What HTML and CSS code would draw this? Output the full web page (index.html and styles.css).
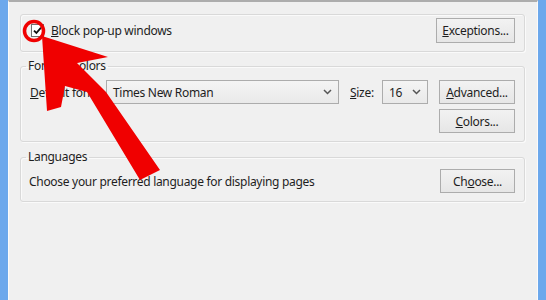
FILE: index.html
```html
<!DOCTYPE html>
<html>
<head>
    <title>Options - Content</title>
    <meta name="viewport" content="width=device-width, initial-scale=1">
    <link rel="stylesheet" href="styles.css">
</head>
<body>
    <div class="window">
        <div class="frame"></div>
        <div class="pane">
            <!-- Pop-ups -->
            <div class="group popup-group">
                <label class="check-row">
                    <span class="checkbox">
                        <svg width="9" height="9" viewBox="0 0 9 9">
                            <path d="M1 4.6 L3.4 7 L8 1.6" fill="none" stroke="#111" stroke-width="1.8"/>
                        </svg>
                    </span>
                    <span><u>B</u>lock pop-up windows</span>
                </label>
                <button class="btn btn-exceptions"><u>E</u>xceptions...</button>
            </div>

            <!-- Fonts & Colors -->
            <fieldset class="group fonts-group">
                <legend>Fonts &amp; Colors</legend>
                <div class="font-row">
                    <span class="label label-font"><u>D</u>efault font:</span>
                    <div class="select select-font">
                        <span>Times New Roman</span>
                        <svg class="chevron" width="9" height="6" viewBox="0 0 9 6">
                            <path d="M1 1 L4.5 4.5 L8 1" fill="none" stroke="#555" stroke-width="1.5"/>
                        </svg>
                    </div>
                    <span class="label label-size"><u>S</u>ize:</span>
                    <div class="select select-size">
                        <span>16</span>
                        <svg class="chevron" width="9" height="6" viewBox="0 0 9 6">
                            <path d="M1 1 L4.5 4.5 L8 1" fill="none" stroke="#555" stroke-width="1.5"/>
                        </svg>
                    </div>
                    <button class="btn btn-advanced"><u>A</u>dvanced...</button>
                </div>
                <div class="colors-row">
                    <button class="btn btn-colors"><u>C</u>olors...</button>
                </div>
            </fieldset>

            <!-- Languages -->
            <fieldset class="group lang-group">
                <legend>Languages</legend>
                <div class="lang-row">
                    <span class="label">Choose your preferred language for displaying pages</span>
                    <button class="btn btn-choose">Ch<u>o</u>ose...</button>
                </div>
            </fieldset>
        </div>
        <div class="frame"></div>
    </div>

    <!-- annotation -->
    <svg class="annotation" width="546" height="300" viewBox="0 0 546 300">
        <circle cx="34" cy="31" r="9.5" fill="none" stroke="#f00000" stroke-width="3.5"/>
        <polygon fill="#f00000"
            points="42,36 108,57 77,63 106,92 160,170 140,180 87,92 65,86 61,107 47,111"/>
    </svg>
</body>
</html>
```

FILE: styles.css
```css
body {
    margin: 0;
    font-family: "Noto Sans", Arial, sans-serif;
    font-size: 12px;
    letter-spacing: -0.3px;
    color: #1e1e1e;
    background: #f0f0f0;
}
.window {
    display: flex;
    height: 300px;
}
.frame {
    width: 8px;
    background: #6ca8ec;
}
.pane {
    flex: 1;
    background: #f0f0f0;
    border-top: 2px solid #adadad;
    border-left: 1px solid #fbfbfb;
    border-right: 1px solid #fbfbfb;
    padding: 12px 12px 0 11px;
}
.group {
    border: 1px solid #d9d9d9;
    border-radius: 3px;
    box-shadow: inset 1px 1px 0 #fafafa, 1px 1px 0 #fafafa;
    margin: 0;
    padding: 3px 9px 8px 9px;
    min-inline-size: 0;
}
.group legend {
    padding: 0 2px;
    margin-left: -4px;
    line-height: 16px;
}
.popup-group {
    display: flex;
    justify-content: space-between;
    align-items: center;
}
.check-row {
    display: flex;
    align-items: center;
    gap: 7px;
    padding-left: 1px;
}
.checkbox {
    width: 11px;
    height: 11px;
    border: 1px solid #707070;
    background: #fff;
    display: flex;
    align-items: center;
    justify-content: center;
}
.btn {
    font-family: inherit;
    font-size: 12px;
    letter-spacing: -0.3px;
    color: #1e1e1e;
    height: 24px;
    padding: 0;
    border: 1px solid #acacac;
    border-radius: 0;
    background: linear-gradient(#f2f2f2, #e6e6e6);
    text-align: center;
}
.btn-exceptions {
    width: 79px;
    height: 25px;
}
.btn-advanced,
.btn-colors {
    width: 76px;
}
.btn-choose {
    width: 75px;
}
.fonts-group {
    margin-top: 6px;
    padding-top: 6px;
}
.font-row {
    display: flex;
    align-items: center;
}
.label-font {
    width: 76px;
}
.label-size {
    width: 32px;
    margin-left: 11px;
}
.select {
    height: 22px;
    border: 1px solid #acacac;
    background: linear-gradient(#f4f4f4, #e9e9e9);
    display: flex;
    align-items: center;
    justify-content: space-between;
    padding: 0 6px 0 6px;
}
.select-font {
    width: 219px;
}
.select-size {
    width: 32px;
}
.btn-advanced {
    margin-left: 11px;
}
.colors-row {
    display: flex;
    justify-content: flex-end;
    margin-top: 5px;
}
.lang-group {
    margin-top: 7px;
    padding-top: 4px;
}
.lang-row {
    display: flex;
    justify-content: space-between;
    align-items: center;
}
.lang-row .label {
    margin-left: -1px;
}
.annotation {
    position: absolute;
    left: 0;
    top: 0;
    pointer-events: none;
}
```
